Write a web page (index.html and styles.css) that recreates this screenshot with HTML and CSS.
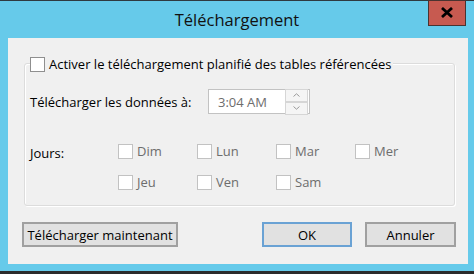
FILE: index.html
```html
<!DOCTYPE html>
<html lang="fr">

<head>
    <meta charset="UTF-8">
    <meta name="viewport" content="width=device-width, initial-scale=1.0">
    <title>Téléchargement</title>

    <link rel="stylesheet" href="styles.css">
</head>

<body>

    <div class="window">
        <div class="titlebar">
            <span class="title">Téléchargement</span>
            <button class="close" aria-label="Fermer">
                <svg width="14" height="11" viewBox="0 0 14 11">
                    <path d="M2 1 L12 10 M12 1 L2 10" stroke="#000" stroke-width="2.8" fill="none" />
                </svg>
            </button>
        </div>

        <div class="client">
            <div class="group">
                <label class="group-head check">
                    <span class="box"></span>
                    Activer le téléchargement planifié des tables référencées
                </label>

                <div class="time-row">
                    <span class="time-label">Télécharger les données à:</span>
                    <div class="time">
                        <span class="time-value">3:04 AM</span>
                        <div class="spin">
                            <span class="spin-btn">
                                <svg width="7" height="4" viewBox="0 0 7 4"><path d="M0.5 3.5 L3.5 0.8 L6.5 3.5" stroke="#9a9a9a" fill="none" /></svg>
                            </span>
                            <span class="spin-btn">
                                <svg width="7" height="4" viewBox="0 0 7 4"><path d="M0.5 0.5 L3.5 3.2 L6.5 0.5" stroke="#9a9a9a" fill="none" /></svg>
                            </span>
                        </div>
                    </div>
                </div>

                <div class="days-row">
                    <span class="days-label">Jours:</span>
                    <div class="days">
                        <label class="check disabled"><span class="box"></span>Dim</label>
                        <label class="check disabled"><span class="box"></span>Lun</label>
                        <label class="check disabled"><span class="box"></span>Mar</label>
                        <label class="check disabled"><span class="box"></span>Mer</label>
                        <label class="check disabled"><span class="box"></span>Jeu</label>
                        <label class="check disabled"><span class="box"></span>Ven</label>
                        <label class="check disabled"><span class="box"></span>Sam</label>
                    </div>
                </div>
            </div>

            <div class="buttons">
                <button class="btn now-btn">Télécharger maintenant</button>
                <button class="btn ok-btn">OK</button>
                <button class="btn">Annuler</button>
            </div>
        </div>
    </div>

</body>

</html>
```

FILE: styles.css
```css
body {
    margin: 0;
    padding: 0;
    width: 474px;
    height: 274px;
    overflow: hidden;
    background-color: #2b2b2b;
    font-family: 'Open Sans', 'Noto Sans', sans-serif;
    font-size: 13px;
    color: #000;
}

.window {
    height: 270px;
    background-color: #66caea;
    border-top: 1px solid #2f3a40;
    border-bottom: 1px solid #2b2b2b;
}

.titlebar {
    display: flex;
    height: 37px;
}

.title {
    flex: 1;
    padding-left: 46px;
    text-align: center;
    font-size: 16.5px;
    line-height: 38px;
    color: #111;
}

.close {
    width: 38px;
    height: 26px;
    margin: -1px 8px 0 0;
    padding: 0 0 1px;
    display: flex;
    align-items: center;
    justify-content: center;
    background-color: #c75a50;
    border: 1px solid #4a3330;
}

.client {
    width: 460px;
    height: 226px;
    margin-left: 8px;
    padding-top: 25px;
    box-sizing: border-box;
    background-color: #f0f0f0;
}

.group {
    width: 431px;
    height: 143px;
    margin-left: 16px;
    box-sizing: border-box;
    border: 1px solid #dcdcdc;
    border-radius: 3px;
    box-shadow: inset 1px 1px 0 #fff, 1px 1px 0 #fff;
    padding: 0 5px;
}

.check {
    display: flex;
    align-items: center;
    gap: 4px;
    height: 16px;
}

.box {
    width: 15px;
    height: 15px;
    box-sizing: border-box;
    background-color: #fff;
    border: 1px solid #8f8f8f;
}

.group-head {
    width: fit-content;
    margin-top: -8px;
    padding-right: 2px;
    background-color: #f0f0f0;
}

.time-row {
    display: flex;
    align-items: center;
    margin-top: 17px;
    height: 25px;
}

.time-label {
    width: 178px;
}

.time {
    display: flex;
    align-items: center;
    justify-content: space-between;
    width: 102px;
    height: 25px;
    box-sizing: border-box;
    padding: 0 1px 0 9px;
    background-color: #fff;
    border: 1px solid #c2c2c2;
    color: #6d6d6d;
}

.spin {
    display: flex;
    flex-direction: column;
}

.spin-btn {
    display: flex;
    align-items: center;
    justify-content: center;
    width: 21px;
    height: 11px;
    background-color: #f5f5f5;
    border: 1px solid #d6d6d6;
}

.days-row {
    display: flex;
    margin-top: 29px;
}

.days-label {
    width: 88px;
    line-height: 16px;
    padding-top: 2px;
}

.days {
    display: grid;
    grid-template-columns: repeat(4, 79px);
    row-gap: 15px;
}

.disabled {
    color: #6d6d6d;
}

.disabled .box {
    border-color: #c2c2c2;
}

.buttons {
    display: flex;
    gap: 13px;
    margin-top: 16px;
    padding: 0 12px 0 14px;
}

.btn {
    height: 25px;
    padding: 0;
    font-family: inherit;
    font-size: 13px;
    color: #000;
    background-color: #e1e1e1;
    border: 2px solid #a0a0a0;
    width: 91px;
}

.now-btn {
    width: 156px;
}

.ok-btn {
    width: 90px;
    margin-left: auto;
    border-color: #6aa2d4;
}
```
